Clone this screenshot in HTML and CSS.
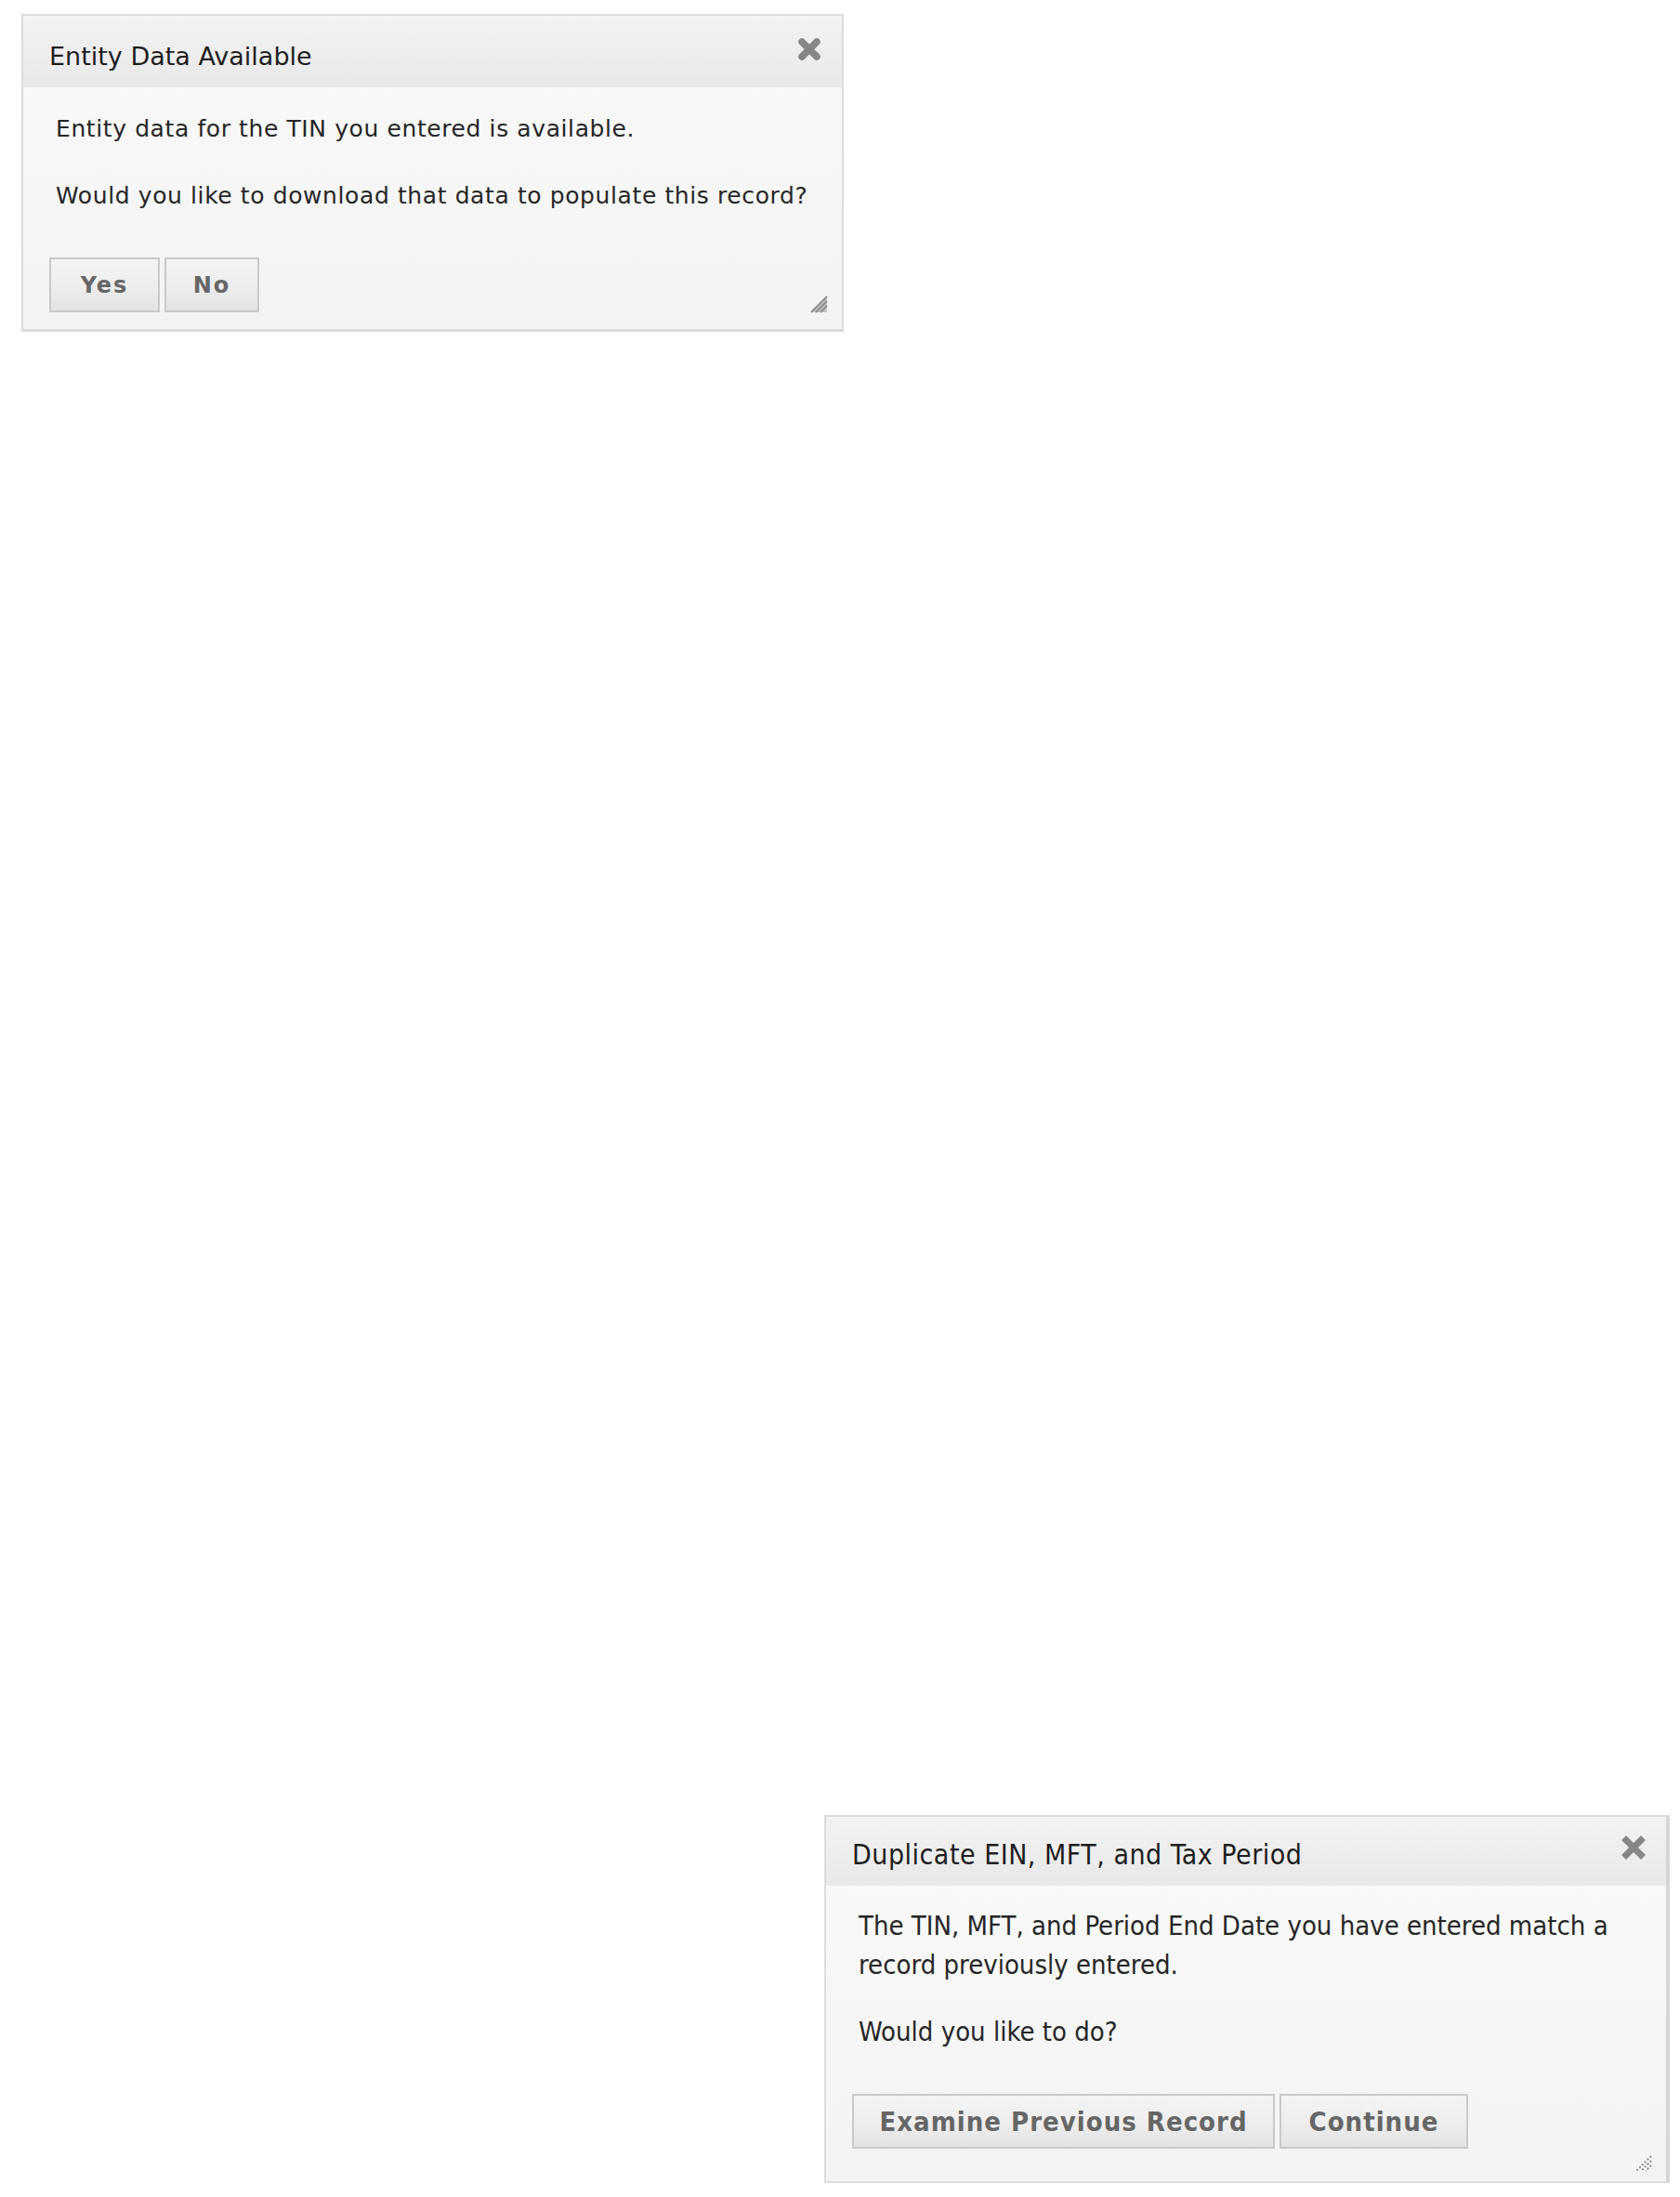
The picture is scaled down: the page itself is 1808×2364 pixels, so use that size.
FILE: index.html
```html
<!DOCTYPE html>
<html>
<head>
<meta charset="utf-8">
<link rel="stylesheet" href="styles.css">
</head>
<body>
<div class="page">
  <div class="dialog d1">
    <div class="titlebar">
      <span class="title">Entity Data Available</span>
      <span class="close"><svg width="28" height="28" viewBox="0 0 28 28"><path d="M6 6 L22 22 M22 6 L6 22" stroke="#868686" stroke-width="7.5" stroke-linecap="round"/></svg></span>
    </div>
    <div class="content">
      <p>Entity data for the TIN you entered is available.</p>
      <p>Would you like to download that data to populate this record?</p>
    </div>
    <div class="buttons">
      <button class="btn btn-yes">Yes</button>
      <button class="btn btn-no">No</button>
    </div>
    <span class="grip"><svg width="22" height="22" viewBox="0 0 22 22"><path d="M20 3 L3 20 L20 20 Z" fill="#c4c4c4"/><path d="M20 3 L3 20 M20 8 L8 20 M20 13 L13 20" stroke="#8f8f8f" stroke-width="2"/></svg></span>
  </div>

  <div class="dialog d2">
    <div class="titlebar">
      <span class="title">Duplicate EIN, MFT, and Tax Period</span>
      <span class="close"><svg width="28" height="28" viewBox="0 0 28 28"><path d="M6 6 L22 22 M22 6 L6 22" stroke="#868686" stroke-width="7" stroke-linecap="square"/></svg></span>
    </div>
    <div class="content">
      <p>The TIN, MFT, and Period End Date you have entered match a record previously entered.</p>
      <p>Would you like to do?</p>
    </div>
    <div class="buttons">
      <button class="btn btn-exam">Examine Previous Record</button>
      <button class="btn btn-cont">Continue</button>
    </div>
    <span class="grip"><svg width="20" height="20" viewBox="0 0 20 20"><path d="M18 2 L2 18 M18 7 L7 18 M18 12 L12 18" stroke="#8f8f8f" stroke-width="2" stroke-dasharray="2 2"/></svg></span>
  </div>
</div>
</body>
</html>
```

FILE: styles.css
```css
html, body {
  margin: 0;
  padding: 0;
  background: #ffffff;
}

.page {
  display: flex;
  flex-direction: column;
  align-items: flex-start;
  padding-top: 15px;
}

.dialog {
  position: relative;
  box-sizing: border-box;
  border: 2px solid #dcdcdc;
  background: linear-gradient(#fafafa, #f3f3f3);
  font-family: "DejaVu Sans", Verdana, sans-serif;
  color: #2a2a2a;
}

.d1 {
  margin-left: 23px;
  width: 885px;
  height: 342px;
  border-bottom-width: 3px;
}

.d2 {
  margin-left: 887px;
  margin-top: 1596px;
  width: 910px;
  height: 396px;
  border-right: 4px solid #d6d6d6;
  font-family: "DejaVu Sans Condensed", "DejaVu Sans", sans-serif;
}

.titlebar {
  display: flex;
  align-items: center;
  justify-content: space-between;
  background: linear-gradient(#f3f3f3, #e8e8e8);
  padding: 0 21px 0 28px;
  box-sizing: border-box;
}

.d1 .titlebar { height: 77px; padding-top: 10px; }
.d2 .titlebar { height: 74px; padding-top: 6px; }

.title {
  font-size: 27px;
  color: #1e1e1e;
}

.d2 .title {
  font-size: 30px;
  letter-spacing: 0.5px;
}

.close {
  display: flex;
  align-self: flex-start;
  margin-top: 12px;
}

.d2 .close { margin-top: 13px; }

.content {
  padding: 0 30px 0 35px;
}

.content p {
  margin: 0;
  font-size: 25px;
  letter-spacing: 0.6px;
  line-height: 42px;
  color: #262626;
}

.d2 .content p {
  font-size: 29px;
  letter-spacing: 0;
}

.d1 .content { padding-top: 24px; }
.d1 .content p + p { margin-top: 30px; }

.d2 .content { padding-top: 22px; }
.d2 .content p + p { margin-top: 30px; }

.buttons {
  display: flex;
  gap: 5px;
  padding-left: 28px;
}

.d1 .buttons { margin-top: 45px; }
.d2 .buttons { margin-top: 46px; }

.btn {
  box-sizing: border-box;
  height: 59px;
  border: 2px solid #c9c9c9;
  background: linear-gradient(#f3f3f3 0%, #eeeeee 50%, #e3e3e3 100%);
  font-family: inherit;
  font-size: 24px;
  font-weight: bold;
  color: #666666;
  padding: 0;
}

.btn-yes { width: 119px; letter-spacing: 2px; }
.btn-no { width: 102px; letter-spacing: 2px; }
.btn-exam { width: 455px; font-size: 29px; letter-spacing: 1px; }
.btn-cont { width: 203px; font-size: 29px; letter-spacing: 1px; }

.grip {
  position: absolute;
  display: flex;
}

.d1 .grip { right: 14px; bottom: 16px; }
.d2 .grip { right: 14px; bottom: 9px; }
```
